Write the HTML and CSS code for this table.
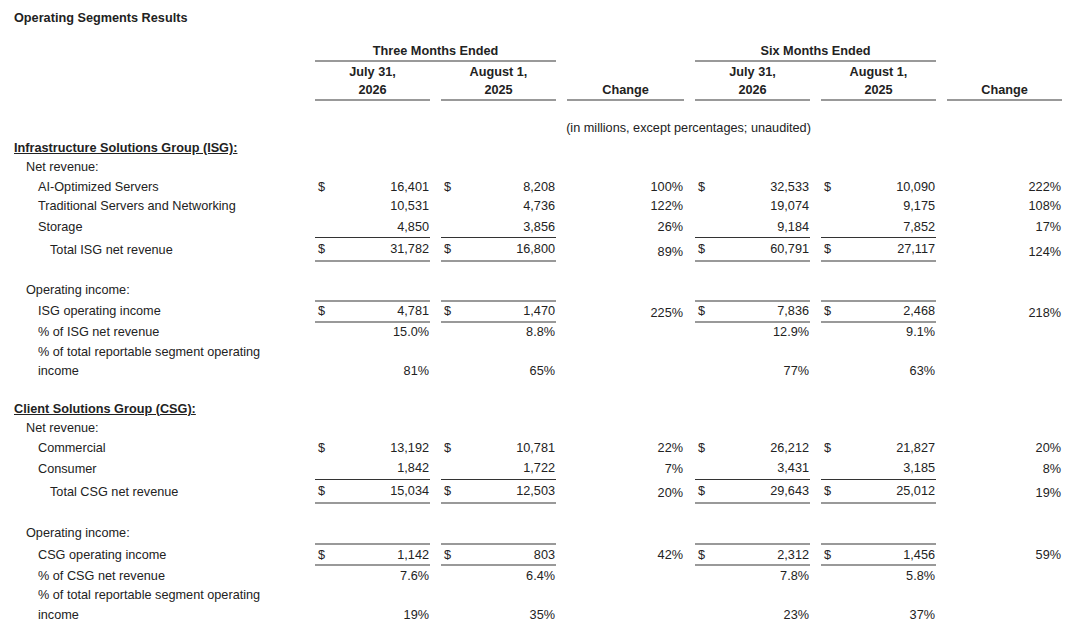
FILE: index.html
```html
<!DOCTYPE html>
<html lang="en">
<head>
    <meta charset="UTF-8">
    <meta name="viewport" content="width=device-width, initial-scale=1.0">
    <title>Operating Segments Results</title>
    <link rel="stylesheet" href="styles.css">
</head>
<body>
<div class="page">
    <h1 class="title">Operating Segments Results</h1>

    <!-- Column headings -->
    <div class="row head-a">
        <div></div>
        <div class="period">Three Months Ended</div>
        <div></div>
        <div class="period">Six Months Ended</div>
        <div></div>
    </div>
    <div class="row head-b">
        <div></div>
        <div class="colhead">July 31,</div>
        <div class="colhead">August 1,</div>
        <div></div>
        <div class="colhead">July 31,</div>
        <div class="colhead">August 1,</div>
        <div></div>
    </div>
    <div class="row head-c">
        <div></div>
        <div class="colhead rule">2026</div>
        <div class="colhead rule">2025</div>
        <div class="colhead rule">Change</div>
        <div class="colhead rule">2026</div>
        <div class="colhead rule">2025</div>
        <div class="colhead rule">Change</div>
    </div>
    <div class="row note-row">
        <div></div>
        <div></div>
        <div></div>
        <div class="note">(in millions, except percentages; unaudited)</div>
        <div></div>
        <div></div>
    </div>

    <!-- ISG -->
    <div class="row">
        <div class="lab group">Infrastructure Solutions Group (ISG):</div>
    </div>
    <div class="row">
        <div class="lab l1">Net revenue:</div>
    </div>
    <div class="row">
        <div class="lab l2">AI-Optimized Servers</div>
        <div class="amt"><span class="cur">$</span>16,401</div>
        <div class="amt"><span class="cur">$</span>8,208</div>
        <div class="chg">100%</div>
        <div class="amt"><span class="cur">$</span>32,533</div>
        <div class="amt"><span class="cur">$</span>10,090</div>
        <div class="chg">222%</div>
    </div>
    <div class="row">
        <div class="lab l2">Traditional Servers and Networking</div>
        <div class="amt">10,531</div>
        <div class="amt">4,736</div>
        <div class="chg">122%</div>
        <div class="amt">19,074</div>
        <div class="amt">9,175</div>
        <div class="chg">108%</div>
    </div>
    <div class="row last">
        <div class="lab l2">Storage</div>
        <div class="amt sub">4,850</div>
        <div class="amt sub">3,856</div>
        <div class="chg">26%</div>
        <div class="amt sub">9,184</div>
        <div class="amt sub">7,852</div>
        <div class="chg">17%</div>
    </div>
    <div class="row total">
        <div class="lab l3">Total ISG net revenue</div>
        <div class="amt tot"><span class="cur">$</span>31,782</div>
        <div class="amt tot"><span class="cur">$</span>16,800</div>
        <div class="chg low">89%</div>
        <div class="amt tot"><span class="cur">$</span>60,791</div>
        <div class="amt tot"><span class="cur">$</span>27,117</div>
        <div class="chg low">124%</div>
    </div>

    <div class="row gap">
        <div class="lab l1">Operating income:</div>
    </div>
    <div class="row income">
        <div class="lab l2">ISG operating income</div>
        <div class="amt boxed"><span class="cur">$</span>4,781</div>
        <div class="amt boxed"><span class="cur">$</span>1,470</div>
        <div class="chg low">225%</div>
        <div class="amt boxed"><span class="cur">$</span>7,836</div>
        <div class="amt boxed"><span class="cur">$</span>2,468</div>
        <div class="chg low">218%</div>
    </div>
    <div class="row">
        <div class="lab l2">% of ISG net revenue</div>
        <div class="amt">15.0%</div>
        <div class="amt">8.8%</div>
        <div></div>
        <div class="amt">12.9%</div>
        <div class="amt">9.1%</div>
        <div></div>
    </div>
    <div class="row">
        <div class="lab l2">% of total reportable segment operating</div>
    </div>
    <div class="row">
        <div class="lab l2">income</div>
        <div class="amt">81%</div>
        <div class="amt">65%</div>
        <div></div>
        <div class="amt">77%</div>
        <div class="amt">63%</div>
        <div></div>
    </div>

    <!-- CSG -->
    <div class="row gap">
        <div class="lab group">Client Solutions Group (CSG):</div>
    </div>
    <div class="row">
        <div class="lab l1">Net revenue:</div>
    </div>
    <div class="row">
        <div class="lab l2">Commercial</div>
        <div class="amt"><span class="cur">$</span>13,192</div>
        <div class="amt"><span class="cur">$</span>10,781</div>
        <div class="chg">22%</div>
        <div class="amt"><span class="cur">$</span>26,212</div>
        <div class="amt"><span class="cur">$</span>21,827</div>
        <div class="chg">20%</div>
    </div>
    <div class="row last">
        <div class="lab l2">Consumer</div>
        <div class="amt sub">1,842</div>
        <div class="amt sub">1,722</div>
        <div class="chg">7%</div>
        <div class="amt sub">3,431</div>
        <div class="amt sub">3,185</div>
        <div class="chg">8%</div>
    </div>
    <div class="row total">
        <div class="lab l3">Total CSG net revenue</div>
        <div class="amt tot"><span class="cur">$</span>15,034</div>
        <div class="amt tot"><span class="cur">$</span>12,503</div>
        <div class="chg low">20%</div>
        <div class="amt tot"><span class="cur">$</span>29,643</div>
        <div class="amt tot"><span class="cur">$</span>25,012</div>
        <div class="chg low">19%</div>
    </div>

    <div class="row gap wide">
        <div class="lab l1">Operating income:</div>
    </div>
    <div class="row income">
        <div class="lab l2">CSG operating income</div>
        <div class="amt boxed"><span class="cur">$</span>1,142</div>
        <div class="amt boxed"><span class="cur">$</span>803</div>
        <div class="chg">42%</div>
        <div class="amt boxed"><span class="cur">$</span>2,312</div>
        <div class="amt boxed"><span class="cur">$</span>1,456</div>
        <div class="chg">59%</div>
    </div>
    <div class="row">
        <div class="lab l2">% of CSG net revenue</div>
        <div class="amt">7.6%</div>
        <div class="amt">6.4%</div>
        <div></div>
        <div class="amt">7.8%</div>
        <div class="amt">5.8%</div>
        <div></div>
    </div>
    <div class="row">
        <div class="lab l2">% of total reportable segment operating</div>
    </div>
    <div class="row">
        <div class="lab l2">income</div>
        <div class="amt">19%</div>
        <div class="amt">35%</div>
        <div></div>
        <div class="amt">23%</div>
        <div class="amt">37%</div>
        <div></div>
    </div>
</div>
</body>
</html>
```

FILE: styles.css
```css
body {
    margin: 0;
    font-family: 'Liberation Sans', Arial, sans-serif;
    font-size: 12.7px;
    color: #222;
    background: #fff;
}
.page {
    padding: 11px 14px;
}
.title {
    margin: 0 0 15px;
    font-size: 12.7px;
    line-height: 15px;
    font-weight: bold;
}
.row {
    display: grid;
    grid-template-columns: 290px 115px 115px 117px 115px 115px 115px;
    column-gap: 11px;
    height: 19.5px;
}
.row > div {
    display: flex;
    align-items: center;
    box-sizing: border-box;
}
.head-a {
    height: 21px;
}
.head-b {
    height: 19px;
}
.head-c {
    height: 20px;
}
.period {
    grid-column: span 2;
    justify-content: center;
    font-weight: bold;
    border-bottom: 2px solid #999;
}
.colhead {
    justify-content: center;
    font-weight: bold;
}
.rule {
    border-bottom: 2px solid #999;
}
.note-row {
    height: 20px;
    margin-top: 17px;
}
.note {
    grid-column: span 2;
    justify-content: center;
    white-space: nowrap;
}
.lab {
    white-space: nowrap;
}
.group {
    font-weight: bold;
    text-decoration: underline;
}
.l1 {
    padding-left: 12px;
}
.l2 {
    padding-left: 24px;
}
.l3 {
    padding-left: 36px;
}
.amt {
    justify-content: flex-end;
    padding: 0 1px 0 3px;
}
.amt .cur {
    margin-right: auto;
}
.chg {
    justify-content: flex-end;
    padding-right: 1px;
}
.chg.low {
    padding-top: 3px;
}
.row.last {
    height: 22px;
}
.amt.sub {
    border-bottom: 1px solid #333;
}
.row.total {
    height: 24px;
}
.amt.tot {
    border-bottom: 2px solid #999;
}
.row.gap {
    margin-top: 18px;
}
.row.gap.wide {
    margin-top: 20px;
}
.row.income {
    height: 23px;
}
.amt.boxed {
    border-top: 2px solid #999;
    border-bottom: 2px solid #999;
}
```
